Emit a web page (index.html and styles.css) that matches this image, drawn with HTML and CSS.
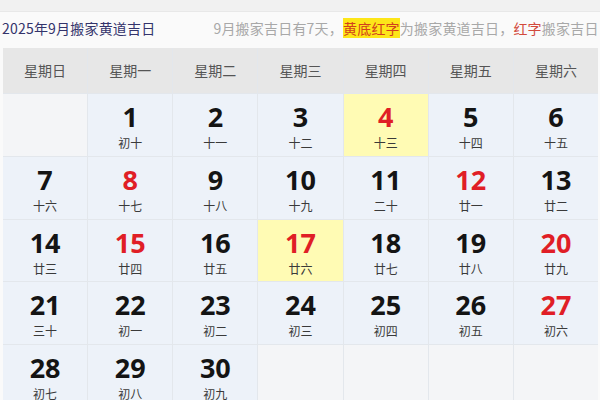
FILE: index.html
```html
<!DOCTYPE html>
<html lang="zh-CN">
<head>
<meta charset="utf-8">
<link rel="stylesheet" href="styles.css">
</head>
<body>
<div class="topband"></div>
<div class="titlebar">
  <span class="title">2025年9月搬家黄道吉日</span>
  <span class="note">9月搬家吉日有7天，<span class="hl">黄底红字</span>为搬家黄道吉日，<span class="red">红字</span>搬家吉日</span>
</div>
<div class="cal">
  <div class="wk">星期日</div><div class="wk">星期一</div><div class="wk">星期二</div><div class="wk">星期三</div><div class="wk">星期四</div><div class="wk">星期五</div><div class="wk">星期六</div>

  <div class="cell empty"></div>
  <div class="cell"><b>1</b><i>初十</i></div>
  <div class="cell"><b>2</b><i>十一</i></div>
  <div class="cell"><b>3</b><i>十二</i></div>
  <div class="cell yel"><b class="r">4</b><i>十三</i></div>
  <div class="cell"><b>5</b><i>十四</i></div>
  <div class="cell"><b>6</b><i>十五</i></div>

  <div class="cell"><b>7</b><i>十六</i></div>
  <div class="cell"><b class="r">8</b><i>十七</i></div>
  <div class="cell"><b>9</b><i>十八</i></div>
  <div class="cell"><b>10</b><i>十九</i></div>
  <div class="cell"><b>11</b><i>二十</i></div>
  <div class="cell"><b class="r">12</b><i>廿一</i></div>
  <div class="cell"><b>13</b><i>廿二</i></div>

  <div class="cell"><b>14</b><i>廿三</i></div>
  <div class="cell"><b class="r">15</b><i>廿四</i></div>
  <div class="cell"><b>16</b><i>廿五</i></div>
  <div class="cell yel"><b class="r">17</b><i>廿六</i></div>
  <div class="cell"><b>18</b><i>廿七</i></div>
  <div class="cell"><b>19</b><i>廿八</i></div>
  <div class="cell"><b class="r">20</b><i>廿九</i></div>

  <div class="cell"><b>21</b><i>三十</i></div>
  <div class="cell"><b>22</b><i>初一</i></div>
  <div class="cell"><b>23</b><i>初二</i></div>
  <div class="cell"><b>24</b><i>初三</i></div>
  <div class="cell"><b>25</b><i>初四</i></div>
  <div class="cell"><b>26</b><i>初五</i></div>
  <div class="cell"><b class="r">27</b><i>初六</i></div>

  <div class="cell"><b>28</b><i>初七</i></div>
  <div class="cell"><b>29</b><i>初八</i></div>
  <div class="cell"><b>30</b><i>初九</i></div>
  <div class="cell empty"></div>
  <div class="cell empty"></div>
  <div class="cell empty"></div>
  <div class="cell empty"></div>
</div>
</body>
</html>
```
FILE: styles.css
```css
html, body {
  margin: 0;
  padding: 0;
  background: #fafafa;
  font-family: "Noto Sans CJK SC", "Noto Sans", sans-serif;
  overflow: hidden;
  width: 600px;
  height: 400px;
}
.topband {
  height: 11px;
  background: #f1f1f1;
  border-bottom: 1px solid #e8e8e8;
}
.titlebar {
  height: 36px;
  display: flex;
  align-items: center;
  padding-left: 2px;
  white-space: nowrap;
  overflow: hidden;
  font-size: 14px;
  line-height: 20px;
  padding-bottom: 4px;
  box-sizing: border-box;
  letter-spacing: 0.2px;
}
.title {
  color: #33336b;
}
.note {
  margin-left: 58px;
  color: #a8a8a8;
}
.hl {
  background: #fde619;
  color: #d2401c;
}
.red {
  color: #d24a3c;
}
.cal {
  margin-left: 3px;
  width: 595px;
  display: grid;
  grid-template-columns: repeat(7, 1fr);
  grid-template-rows: 45px repeat(5, 61.75px);
  gap: 1px;
  background: #e3e7ec;
}
.wk {
  background: #e7e7e7;
  color: #555;
  font-size: 14px;
  display: flex;
  align-items: center;
  justify-content: center;
  padding-bottom: 2px;
}
.cell {
  background: #edf2f9;
  display: flex;
  flex-direction: column;
  align-items: center;
  padding-top: 4px;
  box-sizing: border-box;
}
.cell.empty {
  background: #f4f5f7;
}
.cell.yel {
  background: #fffbb4;
}
.cell b {
  font-family: "Open Sans", "Noto Sans", sans-serif;
  font-weight: 700;
  font-size: 27px;
  line-height: 37px;
  color: #141414;
}
.cell b.r {
  color: #e01e26;
}
.cell i {
  font-style: normal;
  font-size: 12px;
  line-height: 15px;
  color: #3a3a3a;
}
```
